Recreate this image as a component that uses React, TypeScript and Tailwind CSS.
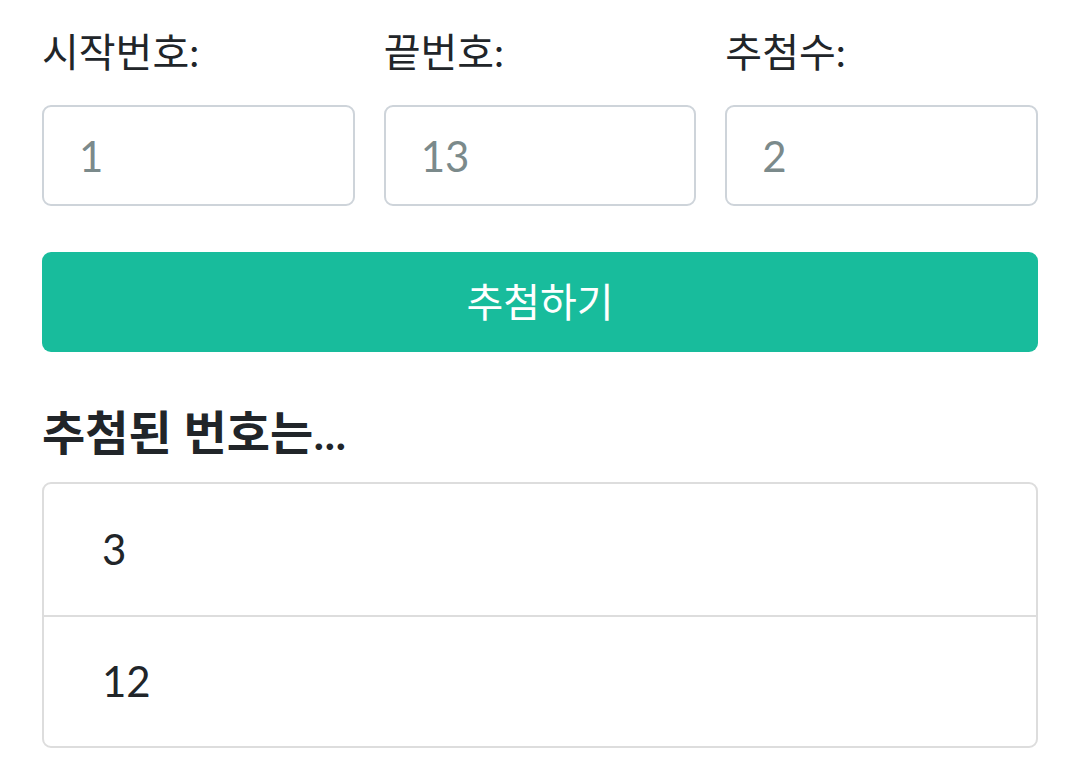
const font = "font-['Lato','Noto_Sans_CJK_KR',sans-serif]";

function Field({ label, value }: { label: string; value: string }) {
    return (
        <div className="flex flex-col">
            <label className="text-[40px] leading-[60px] text-[#212529] mb-[23px]">{label}</label>
            <input
                placeholder={value}
                className="h-[101px] w-full rounded-[9px] border-2 border-[#ced4da] bg-white px-[35px] text-[42px] text-[#212529] placeholder:text-[#7b8a8b] outline-none"
            />
        </div>
    );
}

export default function App() {
    const picked = ['3', '12'];

    return (
        <div className={`${font} min-h-screen bg-white px-[42px] pt-[22px]`}>
            {/* Range inputs */}
            <div className="grid grid-cols-3 gap-[29px]">
                <Field label="시작번호:" value="1" />
                <Field label="끝번호:" value="13" />
                <Field label="추첨수:" value="2" />
            </div>

            <button className="mt-[46px] h-[100px] w-full rounded-[9px] bg-[#18bc9c] text-[40px] text-white">
                추첨하기
            </button>

            {/* Result */}
            <h2 className="mt-[50px] text-[47px] font-semibold leading-[60px] text-[#212529]">추첨된 번호는...</h2>
            <ul className="mt-[20px] rounded-[9px] border-2 border-[#dddddd]">
                {picked.map((n, i) => (
                    <li
                        key={n}
                        className={`flex h-[131px] items-center px-[58px] text-[42px] text-[#212529] ${i > 0 ? 'border-t-2 border-[#dddddd]' : ''}`}
                    >
                        {n}
                    </li>
                ))}
            </ul>
        </div>
    );
}
